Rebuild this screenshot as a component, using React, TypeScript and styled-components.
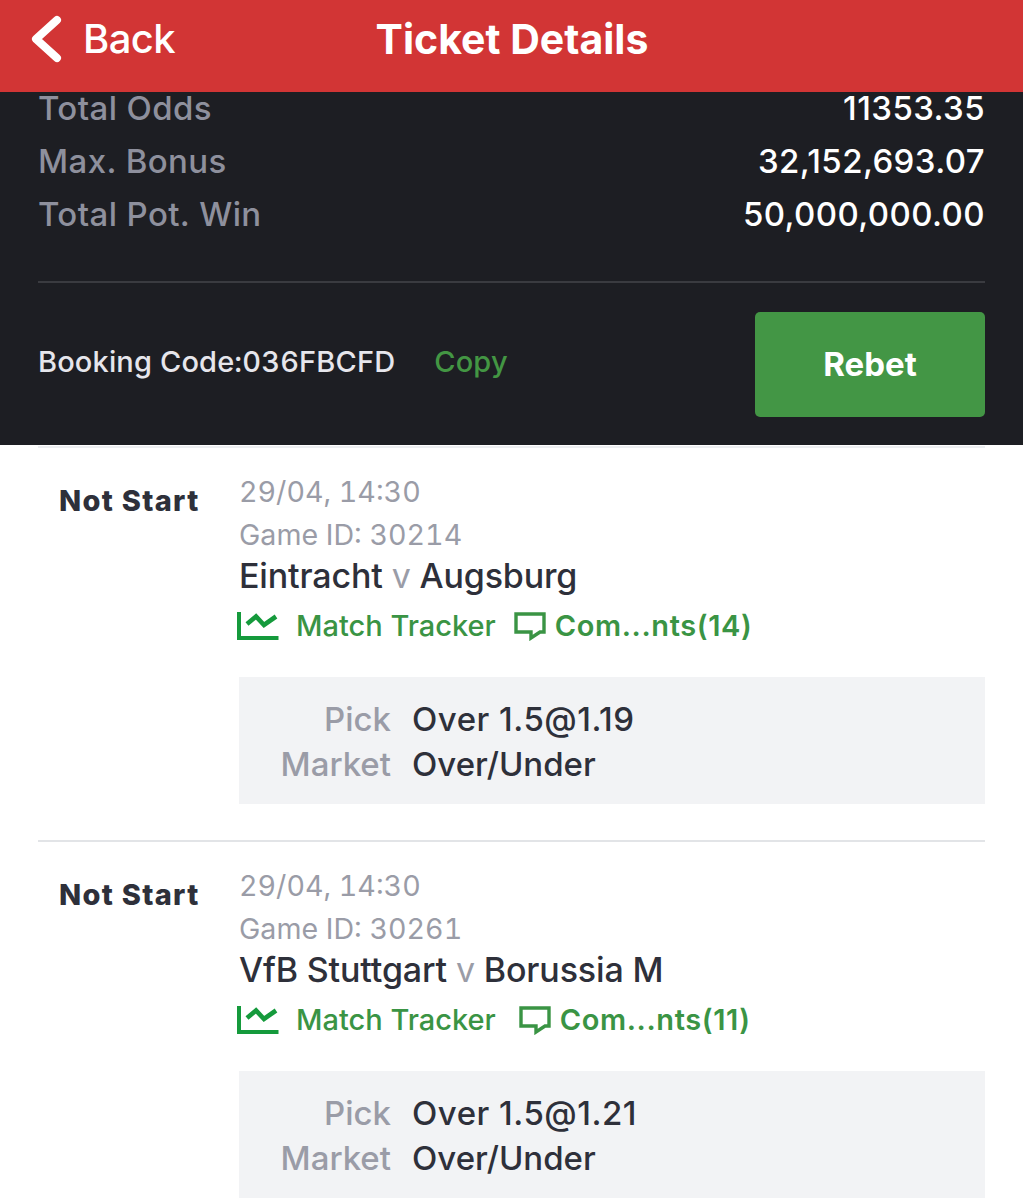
import React from "react";
import styled, { createGlobalStyle } from "styled-components";

const GlobalStyle = createGlobalStyle`
  html, body {
    margin: 0;
    padding: 0;
    background: #fff;
    font-family: "Inter", "Liberation Sans", sans-serif;
  }
`;

const Page = styled.div`
  width: 1023px;
  height: 1200px;
  overflow: hidden;
  background: #fff;
`;

const Header = styled.header`
  height: 92px;
  background: #d23535;
  color: #fff;
  display: grid;
  grid-template-columns: 1fr auto 1fr;
  align-items: center;
  padding: 0 30px 15px 31px;
  box-sizing: border-box;
`;

const BackLink = styled.div`
  display: flex;
  align-items: center;
  gap: 20px;
  font-size: 40px;
  font-weight: 500;
  letter-spacing: -0.6px;
`;

const Title = styled.h1`
  margin: 0;
  font-size: 41px;
  font-weight: 700;
`;

const Summary = styled.section`
  height: 353px;
  box-sizing: border-box;
  background: #1d1e23;
  padding: 0 38px;
`;

const SummaryRows = styled.div`
  display: flex;
  flex-direction: column;
  height: 189px;
  border-bottom: 2px solid #3a3b40;
`;

const SummaryRow = styled.div`
  display: flex;
  justify-content: space-between;
  height: 53px;
  line-height: 33px;
  font-size: 33px;
  font-weight: 500;
  letter-spacing: 0.4px;
`;

const SummaryLabel = styled.span`
  color: #8e909d;
`;

const SummaryValue = styled.span`
  color: #fff;
`;

const BookingRow = styled.div`
  display: flex;
  align-items: center;
  justify-content: space-between;
  margin-top: 29px;
`;

const Booking = styled.div`
  display: flex;
  align-items: center;
  gap: 39px;
  padding-bottom: 6px;
  font-size: 29px;
  font-weight: 500;
  letter-spacing: 0.15px;
  font-variant-numeric: tabular-nums;
  color: #e6e6ec;
`;

const CopyLink = styled.span`
  color: #439643;
`;

const RebetButton = styled.button`
  width: 230px;
  height: 105px;
  padding: 0 0 2px;
  border: none;
  border-radius: 5px;
  background: #439645;
  color: #fff;
  font-family: inherit;
  font-size: 33px;
  font-weight: 700;
`;

const Match = styled.article<{ $first?: boolean }>`
  display: grid;
  grid-template-columns: 201px 1fr;
  height: 394px;
  box-sizing: border-box;
  margin: ${({ $first }) => ($first ? "1px" : "0")} 38px 0;
  padding-top: 24px;
  border-top: 2px solid ${({ $first }) => ($first ? "#eceef1" : "#e2e4e7")};
`;

const Status = styled.div`
  padding: 10px 0 0 21px;
  font-size: 29px;
  line-height: 38px;
  font-weight: 800;
  letter-spacing: 1.3px;
  color: #2e303a;
`;

const Info = styled.div`
  display: flex;
  flex-direction: column;
`;

const MetaLine = styled.div`
  height: 43px;
  line-height: 40px;
  font-size: 28.6px;
  font-variant-numeric: tabular-nums;
  color: #9a9ca7;
`;

const Teams = styled.div`
  height: 44px;
  line-height: 36px;
  font-size: 34px;
  font-weight: 500;
  color: #2e303a;
  letter-spacing: -0.15px;
`;

const Versus = styled.span`
  color: #9a9ca7;
  font-weight: 400;
`;

const Links = styled.div`
  display: flex;
  align-items: center;
  box-sizing: border-box;
  height: 46px;
  padding-top: 1px;
  margin-left: -2px;
  font-size: 29px;
  font-weight: 500;
  color: #3a9444;
`;

const TrackerLink = styled.span`
  display: flex;
  align-items: center;
  gap: 17px;
`;

const CommentLink = styled.span<{ $gap: number }>`
  display: flex;
  align-items: center;
  gap: 9px;
  margin-left: ${({ $gap }) => $gap}px;
  font-weight: 600;
  letter-spacing: 0.6px;
`;

const BetPanel = styled.div`
  display: grid;
  grid-template-columns: 152px 1fr;
  column-gap: 21px;
  align-content: center;
  height: 127px;
  margin-top: 29px;
  padding-top: 2px;
  box-sizing: border-box;
  background: #f2f3f5;
  font-size: 33px;
  line-height: 45px;
  font-weight: 500;
`;

const BetLabel = styled.span`
  text-align: right;
  color: #9a9ca7;
`;

const BetValue = styled.span`
  color: #2e303a;
`;

const PickValue = styled(BetValue)`
  letter-spacing: 0.5px;
`;

const TrackerIcon = () => (
  <svg width="42" height="30" viewBox="0 0 42 30" fill="none" stroke="#159a3c">
    <path d="M2 1V27H41.5" strokeWidth="4" />
    <path d="M10 13L19 5.5L27 14L39 5.5" strokeWidth="4.6" />
  </svg>
);

const CommentIcon = () => (
  <svg width="32" height="30" viewBox="0 0 32 30" fill="none" stroke="#3a9444" strokeWidth="3.4">
    <path d="M2 3H30V21H26L17 27V21H2Z" />
  </svg>
);

const BackIcon = () => (
  <svg width="32" height="48" viewBox="0 0 32 48" fill="none" stroke="#fff" strokeWidth="8" strokeLinecap="round" strokeLinejoin="round">
    <path d="M26 5L5 24L26 43" />
  </svg>
);

const totals = [
  ["Total Odds", "11353.35"],
  ["Max. Bonus", "32,152,693.07"],
  ["Total Pot. Win", "50,000,000.00"],
];

const matches = [
  { id: "30214", home: "Eintracht", away: "Augsburg", comments: "Com...nts(14)", gap: 18, pick: "Over 1.5@1.19" },
  { id: "30261", home: "VfB Stuttgart", away: "Borussia M", comments: "Com...nts(11)", gap: 23, pick: "Over 1.5@1.21" },
];

export default function App() {
  return (
    <Page>
      <GlobalStyle />
      <Header>
        <BackLink>
          <BackIcon />
          Back
        </BackLink>
        <Title>Ticket Details</Title>
      </Header>
      <Summary>
        <SummaryRows>
          {totals.map(([label, value]) => (
            <SummaryRow key={label}>
              <SummaryLabel>{label}</SummaryLabel>
              <SummaryValue>{value}</SummaryValue>
            </SummaryRow>
          ))}
        </SummaryRows>
        <BookingRow>
          <Booking>
            <span>Booking Code:036FBCFD</span>
            <CopyLink>Copy</CopyLink>
          </Booking>
          <RebetButton>Rebet</RebetButton>
        </BookingRow>
      </Summary>
      {matches.map((m, i) => (
        <Match key={m.id} $first={i === 0}>
          <Status>Not Start</Status>
          <Info>
            <MetaLine>29/04, 14:30</MetaLine>
            <MetaLine>Game ID: {m.id}</MetaLine>
            <Teams>
              {m.home} <Versus>v</Versus> {m.away}
            </Teams>
            <Links>
              <TrackerLink>
                <TrackerIcon />
                Match Tracker
              </TrackerLink>
              <CommentLink $gap={m.gap}>
                <CommentIcon />
                {m.comments}
              </CommentLink>
            </Links>
            <BetPanel>
              <BetLabel>Pick</BetLabel>
              <PickValue>{m.pick}</PickValue>
              <BetLabel>Market</BetLabel>
              <BetValue>Over/Under</BetValue>
            </BetPanel>
          </Info>
        </Match>
      ))}
    </Page>
  );
}
